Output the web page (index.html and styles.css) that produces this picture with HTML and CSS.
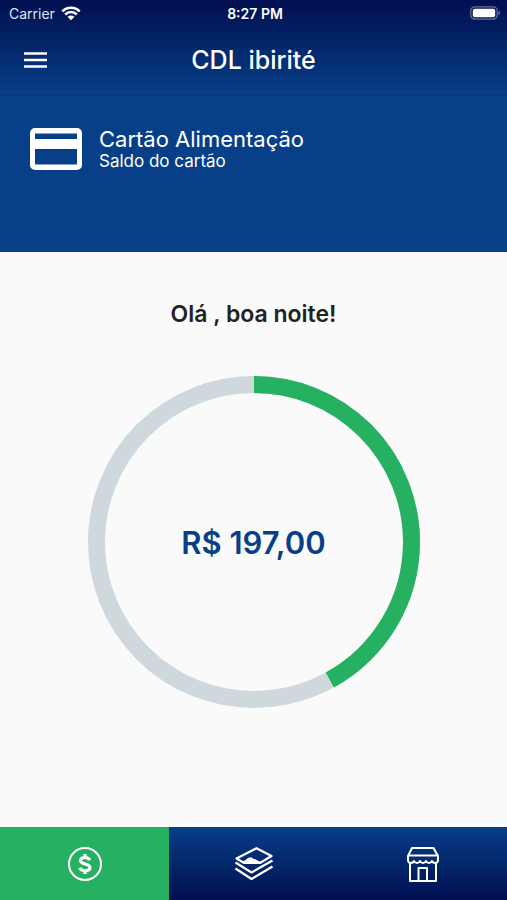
FILE: index.html
```html
<!DOCTYPE html>
<html lang="pt-BR">
<head>
<meta charset="utf-8">
<meta name="viewport" content="width=device-width, initial-scale=1">
<title>CDL ibirité</title>
<link rel="stylesheet" href="styles.css">
</head>
<body>
<div class="app">
  <header class="top">
    <div class="status">
      <div class="carrier">
        <span>Carrier</span>
        <svg class="wifi" viewBox="0 0 20 15" aria-hidden="true">
          <path d="M1.3 5.5C6 .5 14 .5 18.700 5.500M4.200 8.500c3.300-3.200 8.300-3.200 11.600 0" fill="none" stroke="currentColor" stroke-width="2.500"/>
          <path d="M6.500 10.700c2-1.700 5-1.700 7 0L10 14.300z" fill="currentColor"/>
        </svg>
      </div>
      <span class="time">8:27 PM</span>
      <svg class="battery" viewBox="0 0 31 14" aria-hidden="true">
        <rect x=".8" y=".8" width="26.400" height="12.400" rx="4" fill="none" stroke="#fff" stroke-opacity=".4" stroke-width="1.200"/>
        <rect x="2.800" y="2.800" width="22.400" height="8.400" rx="2" fill="#fff"/>
        <path d="M28.500 4.800c2.200.8 2.200 3.600 0 4.400z" fill="#fff" fill-opacity=".4"/>
      </svg>
    </div>
    <div class="bar">
      <button class="menu" type="button" aria-label="Menu">
        <svg viewBox="0 0 24 16" aria-hidden="true"><path d="M0 1.500h23M0 8h23M0 14.500h23" stroke="currentColor" stroke-width="2.400"/></svg>
      </button>
      <h1>CDL ibirité</h1>
    </div>
  </header>

  <section class="card">
    <svg class="card-icon" viewBox="0 0 52 42" aria-hidden="true">
      <path fill="currentColor" fill-rule="evenodd" d="M5 0h42a5 5 0 0 1 5 5v32a5 5 0 0 1-5 5H5a5 5 0 0 1-5-5V5a5 5 0 0 1 5-5zM5 5.500v5.500h42V5.500zM5 21v15.500h42V21z"/>
    </svg>
    <div>
      <h2>Cartão Alimentação</h2>
      <p>Saldo do cartão</p>
    </div>
  </section>

  <main class="content">
    <p class="greeting">Olá , boa noite!</p>
    <div class="gauge">
      <svg viewBox="0 0 332 332" aria-hidden="true">
        <circle class="track" cx="166" cy="166" r="157.500"/>
        <circle class="value" cx="166" cy="166" r="157.500" pathLength="100" stroke-dasharray="42 100" transform="rotate(-90 166 166)"/>
      </svg>
      <strong>R$ 197,00</strong>
    </div>
  </main>

  <nav class="tabs">
    <a class="tab active" href="#saldo" aria-label="Saldo" aria-current="page">
      <svg viewBox="0 0 40 40" aria-hidden="true">
        <circle cx="20" cy="20" r="16" fill="none" stroke="currentColor" stroke-width="2"/>
        <path d="M24.700 16.200c-.8-2-2.400-2.700-4.700-2.700-2.700 0-4.500 1.100-4.500 3.100 0 4.700 9.400 2.200 9.400 7 0 2-1.900 3.200-4.900 3.200-2.700 0-4.400-1-5.100-3M20 10v3.500M20 26.500V30" fill="none" stroke="currentColor" stroke-width="3.200"/>
      </svg>
    </a>
    <a class="tab" href="#extrato" aria-label="Extrato">
      <svg viewBox="0 0 40 40" aria-hidden="true">
        <g fill="none" stroke="currentColor" stroke-width="2.200" stroke-linejoin="round">
          <path d="M10 19 2.500 14.500 22.500 4.200 37.500 12 26 19z"/>
          <path d="M1.500 18.500 17.500 28.500 38.500 16.500"/>
          <path d="M1.500 24.500 17.500 35 38.500 22.500"/>
        </g>
        <path fill="currentColor" d="M7 17.500c3-.3 5-1.500 7-3.500q3-2 5.500.8l2 .4q2.500 2.300 6.500 2.800l-2 2H10z"/>
      </svg>
    </a>
    <a class="tab" href="#lojas" aria-label="Lojas">
      <svg viewBox="0 0 40 40" aria-hidden="true">
        <g fill="none" stroke="currentColor" stroke-width="2" stroke-linejoin="round">
          <path d="M9 4h21.500l4.500 8v4.500c-.5 3-4.500 3.500-6 .5-1 2.800-5 2.800-6 0-1 2.800-5 2.800-6 0-1 2.800-5 2.800-6 0-1.500 3-5.500 2.500-6-.5V12z"/>
          <path d="M5.500 11.500h29M7 18.500V37h26V18.500M15.500 36.500V24h8.500v12.500"/>
        </g>
      </svg>
    </a>
  </nav>
</div>
</body>
</html>
```
FILE: styles.css
```css
* {
  box-sizing: border-box;
}

body,
h1,
h2,
p {
  margin: 0;
}

body {
  font-family: Inter, "Liberation Sans", sans-serif;
  color: #fff;
  background: #fafafa;
}

svg {
  display: block;
}

.app {
  min-height: 100vh;
  display: flex;
  flex-direction: column;
}

.top {
  background: linear-gradient(#000f4f, #073f88);
  border-bottom: 1px solid #073777;
}

.status {
  display: grid;
  grid-template-columns: 1fr auto 1fr;
  align-items: center;
  height: 26px;
  padding: 0 6px 0 9px;
  font-size: 14px;
}

.carrier {
  display: flex;
  align-items: center;
  gap: 6px;
  color: #dfe4f2;
}

.wifi {
  width: 20px;
  height: 15px;
  color: #fff;
}

.time {
  font-size: 14px;
  font-weight: 600;
}

.battery {
  width: 31px;
  height: 14px;
  justify-self: end;
}

.bar {
  display: grid;
  grid-template-columns: 1fr auto 1fr;
  align-items: center;
  height: 69px;
  padding: 0 16px 2px;
}

.menu {
  justify-self: start;
  padding: 8px;
  border: 0;
  background: none;
  color: inherit;
}

.menu svg {
  width: 24px;
  height: 16px;
}

h1 {
  font-size: 25px;
  line-height: 28px;
  font-weight: 500;
}

.card {
  display: flex;
  align-items: flex-start;
  gap: 17px;
  min-height: 156px;
  padding: 32px 30px;
  background: #073f88;
}

.card-icon {
  width: 52px;
  height: 42px;
}

h2 {
  font-size: 22px;
  line-height: 22px;
  font-weight: 400;
}

.card p {
  font-size: 17px;
  line-height: 22px;
}

.content {
  flex: 1;
  display: flex;
  flex-direction: column;
  align-items: center;
  gap: 48px;
  padding: 48px 16px;
}

.greeting {
  font-size: 23px;
  line-height: 28px;
  font-weight: 600;
  color: #222;
}

.gauge {
  display: grid;
  place-items: center;
  width: 100%;
  max-width: 332px;
}

.gauge > * {
  grid-area: 1 / 1;
}

.gauge svg {
  width: 100%;
}

.gauge circle {
  fill: none;
  stroke-width: 17px;
}

.track {
  stroke: #cfd8dc;
}

.value {
  stroke: #25b062;
}

.gauge strong {
  font-size: 31px;
  font-weight: 600;
  color: #073f88;
}

.tabs {
  display: grid;
  grid-template-columns: repeat(3, 1fr);
  background: linear-gradient(#073f88, #000f4f);
}

.tab {
  display: grid;
  place-items: center;
  height: 73px;
  color: #fff;
}

.tab.active {
  background: #25b062;
}

.tab svg {
  width: 40px;
  height: 40px;
}
```
